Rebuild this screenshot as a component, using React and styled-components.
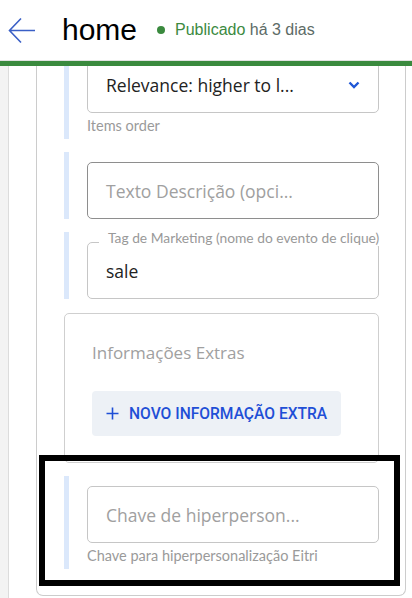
import React from "react";
import styled, { createGlobalStyle } from "styled-components";

const GlobalStyle = createGlobalStyle`
  html, body {
    margin: 0;
    padding: 0;
    background: #ffffff;
    overflow: hidden;
  }
  * { box-sizing: border-box; }
`;

const Page = styled.div`
  position: relative;
  width: 412px;
  height: 598px;
  overflow: hidden;
  font-family: "Open Sans", Roboto, sans-serif;
`;

const Header = styled.header`
  height: 61px;
  display: flex;
  align-items: center;
  padding-left: 8px;
  border-bottom: 1px solid #e2e2e2;
`;

const BackButton = styled.button`
  width: 28px;
  height: 28px;
  padding: 0;
  border: 0;
  background: none;
  display: flex;
  align-items: center;
  justify-content: center;
  cursor: pointer;
`;

const Title = styled.h1`
  margin: 0 0 0 26px;
  font-family: "Liberation Sans", Arial, sans-serif;
  font-weight: 400;
  font-size: 30px;
  color: #000;
  line-height: 1;
`;

const Status = styled.div`
  display: flex;
  align-items: center;
  margin-left: 20px;
  font-family: "Liberation Sans", Arial, sans-serif;
  font-size: 16px;
  color: #3c8a3f;
`;

const Dot = styled.span`
  width: 8px;
  height: 8px;
  border-radius: 50%;
  background: #3a8a3e;
  margin-right: 10px;
`;

const Muted = styled.span`
  color: #5d6b66;
`;

const Progress = styled.div`
  height: 5px;
  background: #3a8a3e;
`;

const Body = styled.div`
  display: flex;
  height: 532px;
  overflow: hidden;
`;

const Rail = styled.div`
  width: 9px;
  background: #f3f3f3;
  border-right: 1px solid #dcdcdc;
`;

const Panel = styled.div`
  flex: 1;
  padding: 0 6px 0 27px;
`;

const Card = styled.div`
  border: 1px solid #cccccc;
  border-top: 0;
  border-radius: 0 0 7px 7px;
  padding: 0 26px 26px 27px;
  display: flex;
  flex-direction: column;
  gap: 13px;
`;

const Field = styled.div`
  border-left: 5px solid #dbe8fb;
  padding: 10px 0 0 18px;
  margin-top: ${(p) => (p.$cut ? "-20px" : "0")};
`;

const Box = styled.div`
  position: relative;
  height: 57px;
  border: 1px solid ${(p) => (p.$strong ? "#8e8e8e" : "#c6c6c6")};
  border-radius: 5px;
  display: flex;
  align-items: center;
  justify-content: space-between;
  padding: 0 18px;
  font-size: 17.5px;
  color: ${(p) => (p.$placeholder ? "#a0a0a0" : "#222")};
`;

const FloatLabel = styled.span`
  position: absolute;
  left: 11px;
  top: -13px;
  padding: 0 4px 0 9px;
  background: #fff;
  font-family: Lato, "Open Sans", sans-serif;
  font-size: 13.8px;
  line-height: 16px;
  color: #999;
  white-space: nowrap;
`;

const Helper = styled.div`
  padding: 4px 0;
  font-family: Lato, "Open Sans", sans-serif;
  font-size: 14.5px;
  line-height: 18px;
  color: #9a9a9a;
`;

const Section = styled.div`
  border: 1px solid #cfcfcf;
  border-radius: 5px;
  margin-top: 1px;
  padding: 29px 0 26px 27px;
`;

const SectionTitle = styled.div`
  font-size: 17px;
  line-height: 20px;
  color: #a0a0a0;
  margin-bottom: 28px;
`;

const AddButton = styled.button`
  height: 45px;
  padding: 0 14px;
  border: 0;
  border-radius: 4px;
  background: #edf1f6;
  display: inline-flex;
  align-items: center;
  gap: 10px;
  font-family: Roboto, "Liberation Sans", sans-serif;
  font-size: 15.6px;
  font-weight: 500;
  color: #1f4fd6;
  text-transform: uppercase;
  cursor: pointer;
`;

const Highlight = styled.div`
  position: absolute;
  left: 39px;
  top: 455px;
  width: 361px;
  height: 131px;
  border: 6px solid #000;
  pointer-events: none;
`;

export default function App() {
  return (
    <Page>
      <GlobalStyle />
      <Header>
        <BackButton aria-label="voltar">
          <svg width="28" height="27" viewBox="0 0 28 27" fill="none">
            <path d="M27 13.5H1.5M13 1.5L1.5 13.5L13 25.5" stroke="#3a5fc6" strokeWidth="1.6" />
          </svg>
        </BackButton>
        <Title>home</Title>
        <Status>
          <Dot />
          Publicado&nbsp;<Muted>há 3 dias</Muted>
        </Status>
      </Header>
      <Progress />
      <Body>
        <Rail />
        <Panel>
          <Card>
            <Field $cut>
              <Box>
                Relevance: higher to l...
                <svg width="12" height="8" viewBox="0 0 12 8" fill="none">
                  <path d="M1.5 1.5L6 6L10.5 1.5" stroke="#1f57d6" strokeWidth="2.4" />
                </svg>
              </Box>
              <Helper>Items order</Helper>
            </Field>
            <Field>
              <Box $strong $placeholder>Texto Descrição (opci...</Box>
            </Field>
            <Field>
              <Box>
                <FloatLabel>Tag de Marketing (nome do evento de clique)</FloatLabel>
                sale
              </Box>
            </Field>
            <Section>
              <SectionTitle>Informações Extras</SectionTitle>
              <AddButton>
                <svg width="13" height="13" viewBox="0 0 13 13" fill="none">
                  <path d="M6.5 0.5V12.5M0.5 6.5H12.5" stroke="#1f4fd6" strokeWidth="1.6" />
                </svg>
                Novo informação extra
              </AddButton>
            </Section>
            <Field>
              <Box $placeholder>Chave de hiperperson...</Box>
              <Helper>Chave para hiperpersonalização Eitri</Helper>
            </Field>
          </Card>
        </Panel>
      </Body>
      <Highlight />
    </Page>
  );
}
